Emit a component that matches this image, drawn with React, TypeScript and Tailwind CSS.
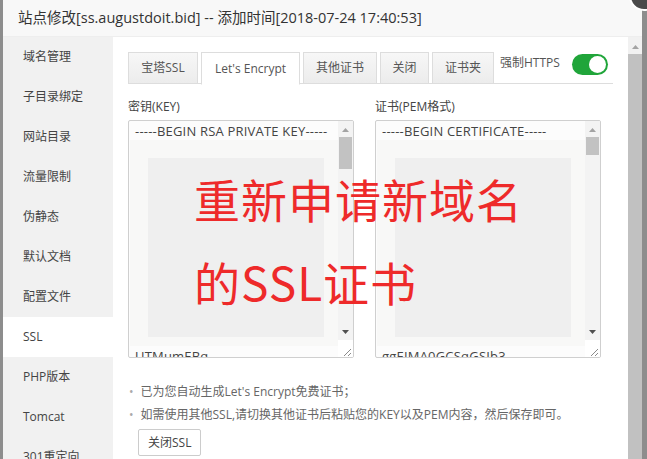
import React from "react";

const MENU = [
  "域名管理",
  "子目录绑定",
  "网站目录",
  "流量限制",
  "伪静态",
  "默认文档",
  "配置文件",
  "SSL",
  "PHP版本",
  "Tomcat",
  "301重定向",
];

const TABS = [
  { label: "宝塔SSL", w: "w-[70px]" },
  { label: "Let's Encrypt", w: "w-[99px]", active: true },
  { label: "其他证书", w: "w-[74px]" },
  { label: "关闭", w: "w-[49px]" },
  { label: "证书夹", w: "w-[62px]" },
];

function Triangle({ up }: { up?: boolean }) {
  return (
    <svg width="7" height="4" viewBox="0 0 7 4" className="block">
      {up ? <path d="M0 4 L3.5 0 L7 4 Z" fill="#a3a3a3" /> : <path d="M0 0 L3.5 4 L7 0 Z" fill="#505050" />}
    </svg>
  );
}

// fake textarea: first line, whited-out middle, last line, own scrollbar
function KeyBox({ first, last, thumb }: { first: string; last: string; thumb: string }) {
  return (
    <div className="flex h-[238px] overflow-hidden rounded-[2px] border border-[#cfcfcf] bg-[#fcfcfc]">
      <div className="relative flex-1 overflow-hidden">
        <div className="flex h-full flex-col justify-between pl-[6px] text-[13px] leading-[18px] tracking-[0.2px] text-[#444]">
          <div className="pt-[1px] whitespace-nowrap">{first}</div>
          <div className="mb-[-8px] whitespace-nowrap">{last}</div>
        </div>
        {/* screenshot annotation: whiteout + grey block */}
        <div className="absolute left-[1px] right-0 top-[19px] bottom-[11px] bg-[#f8f8f7] pl-[18px] pr-[14px] pt-[18px] pb-[9px]">
          <div className="h-full w-full bg-[#efefef]" />
        </div>
      </div>
      <div className="flex w-[15px] flex-col bg-[#f3f3f3]">
        <div className="flex h-[16px] items-center justify-center pt-[2px]">
          <Triangle up />
        </div>
        <div className={`mx-[1px] ${thumb} bg-[#c2c2c2]`} />
        <div className="flex-1" />
        <div className="flex h-[16px] items-center justify-center">
          <Triangle />
        </div>
        <div className="relative h-[17px] bg-white">
          <svg width="15" height="17" viewBox="0 0 15 17" className="absolute inset-0">
            <path d="M13 9 L6 16 M13 13 L10 16" stroke="#8a8a8a" strokeWidth="1" />
          </svg>
        </div>
      </div>
    </div>
  );
}

export default function App() {
  return (
    <div className="relative h-[459px] w-[647px] overflow-hidden bg-[#8d8d8d] font-['Open_Sans','Noto_Sans_CJK_SC',sans-serif]">
      {/* modal */}
      <div className="absolute left-[3px] top-0 flex h-[470px] w-[639px] flex-col bg-white">
        <div className="flex h-[37px] shrink-0 items-center border-b border-[#eeeeee] bg-[#f8f8f8] pl-[15px] text-[14.5px] text-[#333]">
          站点修改[ss.augustdoit.bid] -- 添加时间[2018-07-24 17:40:53]
        </div>

        <div className="flex flex-1">
          {/* side menu */}
          <div className="w-[110px] shrink-0 bg-[#f1f1f1]">
            {MENU.map((m) => (
              <div
                key={m}
                className={`flex h-[40px] items-center pl-[20px] text-[12px] text-[#444] ${m === "SSL" ? "bg-white" : ""}`}
              >
                {m}
              </div>
            ))}
          </div>

          {/* content */}
          <div className="flex-1 pl-[15px] pr-[15px] pt-[15px]">
            <div className="flex h-[32px] items-start border-b border-[#dddddd]">
              <div className="flex gap-[3px]">
                {TABS.map((t) => (
                  <div
                    key={t.label}
                    className={`flex ${t.w} items-center justify-center border border-[#dddddd] text-[12px] text-[#555] ${
                      t.active
                        ? "h-[33px] border-b-white bg-white"
                        : "h-[32px] bg-gradient-to-b from-[#f7f7f7] to-[#ececec]"
                    }`}
                  >
                    {t.label}
                  </div>
                ))}
              </div>
              <div className="ml-[6px] pt-[2px] text-[12px] text-[#555]">强制HTTPS</div>
              <div className="ml-[12px] mt-[2px] flex h-[21px] w-[36px] items-center justify-end rounded-full bg-[#20a53a] pr-[2px]">
                <div className="h-[17px] w-[17px] rounded-full bg-white" />
              </div>
            </div>

            <div className="mt-[14px] grid grid-cols-[226px_226px] gap-x-[21px]">
              <div>
                <div className="mb-[4px] text-[12px] leading-[18px] text-[#444]">密钥(KEY)</div>
                <KeyBox first="-----BEGIN RSA PRIVATE KEY-----" last="UTMumEBq" thumb="h-[32px]" />
              </div>
              <div>
                <div className="mb-[4px] text-[12px] leading-[18px] text-[#444]">证书(PEM格式)</div>
                <KeyBox first="-----BEGIN CERTIFICATE-----" last="ggEIMA0GCSqGSIb3" thumb="h-[18px]" />
              </div>
            </div>

            <ul className="mt-[22px] text-[12px] leading-[23px] text-[#666]">
              <li className="flex gap-[7px] pl-[1px]">
                <span className="text-[#aaa]">•</span>
                <span>已为您自动生成Let's Encrypt免费证书；</span>
              </li>
              <li className="flex gap-[7px] pl-[1px]">
                <span className="text-[#aaa]">•</span>
                <span>如需使用其他SSL,请切换其他证书后粘贴您的KEY以及PEM内容，然后保存即可。</span>
              </li>
            </ul>
            <button
              type="button"
              className="ml-[10px] mt-[3px] h-[27px] rounded-[2px] border border-[#cccccc] bg-white px-[9px] text-[12px] text-[#444]"
            >
              关闭SSL
            </button>
          </div>

          {/* modal scrollbar */}
          <div className="flex w-[14px] shrink-0 flex-col bg-[#f1f1f1]">
            <div className="flex h-[17px] items-center justify-center pt-[2px]">
              <Triangle up />
            </div>
            <div className="flex-1 bg-[#c1c1c1]" />
          </div>
        </div>
      </div>

      {/* close button of the layer */}
      <div className="absolute right-[-12px] top-[-19px] h-[30px] w-[30px] rounded-full border-2 border-white bg-[#4a4a4a]" />

      {/* red annotation */}
      <div className="pointer-events-none absolute left-[194px] top-[157px] font-['Noto_Sans_CJK_SC',sans-serif] text-[46px] leading-[83px] tracking-[1px] text-[#ee2a2a]">
        <div>重新申请新域名</div>
        <div>的SSL证书</div>
      </div>
    </div>
  );
}
